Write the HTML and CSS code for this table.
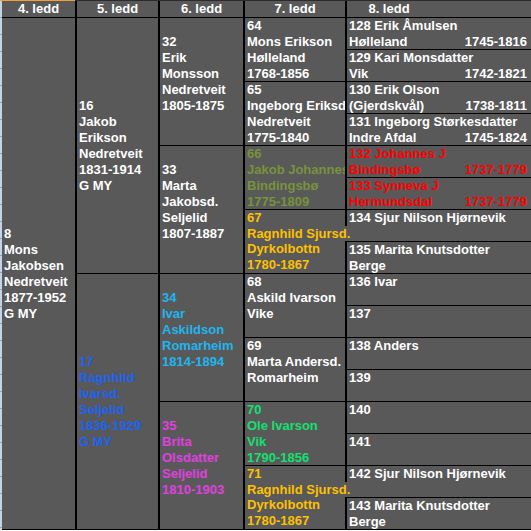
FILE: index.html
```html
<!DOCTYPE html>
<html>
<head>
<meta charset="utf-8">
<link rel="stylesheet" href="styles.css">
</head>
<body>
<div class="topbar"><div class="sel"></div><div class="rest"></div></div>
<div class="frame">
  <div class="edge"></div>
  <div class="sheet">
    <!-- 4. ledd -->
    <div class="hd">4. ledd</div>
    <div class="p g4 mid">
      <div>8</div><div>Mons</div><div>Jakobsen</div><div>Nedretveit</div><div>1877-1952</div><div>G MY</div>
    </div>

    <!-- 5. ledd -->
    <div class="hd">5. ledd</div>
    <div class="p g5 mid">
      <div>16</div><div>Jakob</div><div>Erikson</div><div>Nedretveit</div><div>1831-1914</div><div>G MY</div>
    </div>
    <div class="p g5 mid blue">
      <div>17</div><div>Ragnhild</div><div>Ivarsd.</div><div>Seljelid</div><div>1836-1929</div><div>G MY</div>
    </div>

    <!-- 6. ledd -->
    <div class="hd">6. ledd</div>
    <div class="p g6 mid tail">
      <div>32</div><div>Erik</div><div>Monsson</div><div>Nedretveit</div><div>1805-1875</div>
    </div>
    <div class="p g6 mid tail">
      <div>33</div><div>Marta</div><div>Jakobsd.</div><div>Seljelid</div><div>1807-1887</div>
    </div>
    <div class="p g6 mid tail sky">
      <div>34</div><div>Ivar</div><div>Askildson</div><div>Romarheim</div><div>1814-1894</div>
    </div>
    <div class="p g6 mid tail pink">
      <div>35</div><div>Brita</div><div>Olsdatter</div><div>Seljelid</div><div>1810-1903</div>
    </div>

    <!-- 7. ledd -->
    <div class="hd">7. ledd</div>
    <div class="p g7"><div>64</div><div>Mons Erikson</div><div>Hølleland</div><div>1768-1856</div></div>
    <div class="p g7"><div>65</div><div>Ingeborg Eriksd</div><div>Nedretveit</div><div>1775-1840</div></div>
    <div class="p g7 olive"><div>66</div><div>Jakob Johannes</div><div>Bindingsbø</div><div>1775-1809</div></div>
    <div class="p g7 gold spill"><div>67</div><div class="over">Ragnhild Sjursd.</div><div>Dyrkolbottn</div><div>1780-1867</div></div>
    <div class="p g7"><div>68</div><div>Askild Ivarson</div><div>Vike</div></div>
    <div class="p g7"><div>69</div><div>Marta Andersd.</div><div>Romarheim</div></div>
    <div class="p g7 green"><div>70</div><div>Ole Ivarson</div><div>Vik</div><div>1790-1856</div></div>
    <div class="p g7 gold spill"><div>71</div><div class="over">Ragnhild Sjursd.</div><div>Dyrkolbottn</div><div>1780-1867</div></div>

    <!-- 8. ledd -->
    <div class="hd h8">8. ledd</div>
    <div class="p g8"><div>128 Erik Åmulsen</div><div class="ln"><span>Hølleland</span><span>1745-1816</span></div></div>
    <div class="p g8"><div>129 Kari Monsdatter</div><div class="ln"><span>Vik</span><span>1742-1821</span></div></div>
    <div class="p g8"><div>130 Erik Olson</div><div class="ln"><span>(Gjerdskvål)</span><span>1738-1811</span></div></div>
    <div class="p g8"><div>131 Ingeborg Størkesdatter</div><div class="ln"><span>Indre Afdal</span><span>1745-1824</span></div></div>
    <div class="p g8 red"><div>132 Johannes J</div><div class="ln"><span>Bindingsbø</span><span>1737-1779</span></div></div>
    <div class="p g8 red"><div>133 Synneva J</div><div class="ln"><span>Hermundsdal</span><span>1737-1779</span></div></div>
    <div class="p g8"><div>134 Sjur Nilson Hjørnevik</div></div>
    <div class="p g8"><div>135 Marita Knutsdotter</div><div>Berge</div></div>
    <div class="p g8"><div>136 Ivar</div></div>
    <div class="p g8"><div>137</div></div>
    <div class="p g8"><div>138 Anders</div></div>
    <div class="p g8"><div>139</div></div>
    <div class="p g8"><div>140</div></div>
    <div class="p g8"><div>141</div></div>
    <div class="p g8"><div>142 Sjur Nilson Hjørnevik</div></div>
    <div class="p g8"><div>143 Marita Knutsdotter</div><div>Berge</div></div>
  </div>
</div>
</body>
</html>
```

FILE: styles.css
```css
html, body {
  margin: 0;
  padding: 0;
  background: #ffffff;
}

body {
  width: 531px;
  font-family: "Liberation Sans", Arial, sans-serif;
  font-weight: bold;
  font-size: 13px;
  color: #ffffff;
}

.topbar {
  display: flex;
  height: 1px;
}

.topbar .sel {
  width: 75px;
  background: #f2a13a;
}

.topbar .rest {
  flex: 1;
  background: #2b2b2b;
}

.frame {
  display: flex;
}

.edge {
  width: 2px;
  flex: none;
  background: repeating-linear-gradient(to bottom,
    #c5d3e6 0px, #c5d3e6 16px, #8ea4c2 16px, #8ea4c2 17px);
}

.sheet {
  flex: 1;
  display: grid;
  grid-template-columns: 73px 81px 83px 100px 1fr;
  grid-template-rows: 16px repeat(32, 15px);
  grid-auto-flow: column;
  column-gap: 2px;
  row-gap: 1px;
  background: #000000;
  border-bottom: 1px solid #000000;
}

.hd {
  background: #595959;
  text-align: center;
  line-height: 16px;
  white-space: nowrap;
  overflow: hidden;
}

.h8 {
  padding-right: 100px;
}

.p {
  background: #595959;
  padding-left: 2px;
  line-height: 16px;
  white-space: nowrap;
  overflow: hidden;
  min-width: 0;
}

.p > div {
  height: 16px;
}

.g4 { grid-row: span 32; }
.g5 { grid-row: span 16; }
.g6 { grid-row: span 8; }
.g7 { grid-row: span 4; }
.g8 { grid-row: span 2; padding-right: 4px; }

.mid {
  display: flex;
  flex-direction: column;
  justify-content: center;
}

.tail {
  padding-bottom: 16px;
}

.ln {
  display: flex;
  justify-content: space-between;
}

.spill {
  overflow: visible;
}

.spill .over {
  position: relative;
  z-index: 1;
  width: max-content;
  height: 15px;
  padding-right: 4px;
  background: #595959;
}

.olive { color: #77933c; }
.gold  { color: #ffc000; }
.red   { color: #ff0000; }
.sky   { color: #1fb5f0; }
.blue  { color: #1c63f2; }
.pink  { color: #e040e0; }
.green { color: #14e070; }
```
